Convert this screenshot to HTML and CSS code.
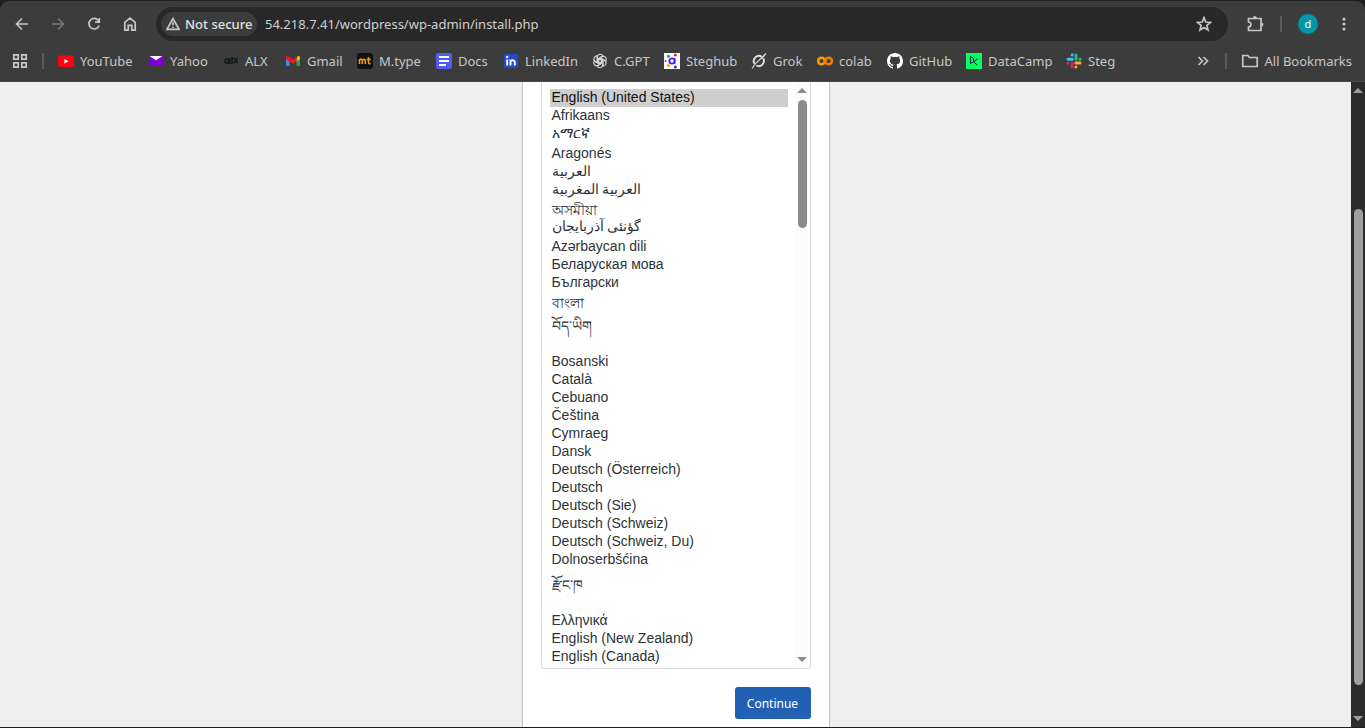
FILE: index.html
```
<!DOCTYPE html>
<html lang="en">
<head>
<meta charset="utf-8">
<title>WordPress › Installation</title>
<link rel="stylesheet" href="styles.css">
</head>
<body>
<div class="window">
<header class="chrome">
  <div class="toolbar">
    <button class="nav" aria-label="Back"><svg width="16" height="16" viewBox="0 0 16 16"><path d="M14 8H3M8 2.500L2.500 8L8 13.500"/></svg></button>
    <button class="nav dim" aria-label="Forward"><svg width="16" height="16" viewBox="0 0 16 16"><path d="M2 8H13M8 2.500L13.500 8L8 13.500"/></svg></button>
    <button class="nav" aria-label="Reload"><svg width="16" height="16" viewBox="0 0 16 16"><path d="M12.800 5A5.300 5.300 0 1 0 13.200 9.500M13.300 2V6.200H9"/></svg></button>
    <button class="nav" aria-label="Home"><svg width="16" height="16" viewBox="0 0 16 16"><path d="M2.800 6.300L8 2.200L13.200 6.300V14.200H9.800V9.300H6.200V14.200H2.800Z"/></svg></button>
    <div class="omnibox">
      <button class="secure"><svg width="14" height="14" viewBox="0 0 14 14"><path d="M7 1.600L13 12.300H1ZM7 5.300V8.600M7 9.700V11"/></svg>Not secure</button>
      <input class="url" type="text" aria-label="Address" value="54.218.7.41/wordpress/wp-admin/install.php">
      <button class="star" aria-label="Bookmark this page"><svg width="16" height="16" viewBox="0 0 16 16"><path d="M8 1.700L9.800 6L14.500 6.400L10.900 9.400L12 14L8 11.500L4 14L5.100 9.400L1.500 6.400L6.200 6Z"/></svg></button>
    </div>
    <button class="nav ext" aria-label="Extensions"><svg width="18" height="18" viewBox="0 0 18 18"><path d="M2.500 3.500H15V15.500H2.500V12Q5 11.500 5 9.500T2.500 7Z"/><path class="knob" d="M7 3A1.900 1.900 0 0 1 10.800 3ZM15.500 7.600A1.900 1.900 0 0 1 15.500 11.400Z"/></svg></button>
    <span class="divider"></span>
    <button class="avatar" aria-label="Profile">d</button>
    <button class="nav menu" aria-label="Menu"><svg width="16" height="16" viewBox="0 0 16 16"><g fill="#c7c7c7" stroke="none"><circle cx="8" cy="3" r="1.600"/><circle cx="8" cy="8" r="1.600"/><circle cx="8" cy="13" r="1.600"/></g></svg></button>
  </div>
  <nav class="bookmarks">
    <button class="apps" aria-label="Tab groups"><svg width="16" height="16" viewBox="0 0 16 16"><path d="M1.800 1.800H6.200V6.200H1.800ZM9.800 1.800H14.200V6.200H9.800ZM1.800 9.800H6.200V14.200H1.800ZM9.800 9.800H14.200V14.200H9.800Z"/></svg></button>
    <span class="divider"></span>
    <div class="links">
      <a href="#"><svg width="16" height="16" viewBox="0 0 16 16"><rect y="2.500" width="16" height="11.500" rx="2.500" fill="#ff0015"/><path d="M6.300 6L10.500 8.200L6.300 10.400Z" fill="#fff"/></svg>YouTube</a>
      <a href="#"><svg width="16" height="16" viewBox="0 0 16 16"><path d="M1 3H15V13H1Z" fill="#7d00d8"/><path d="M1.500 3H14.500L8 7.200Z" fill="#fff"/></svg>Yahoo</a>
      <a href="#"><svg width="16" height="16" viewBox="0 0 16 16" fill="none" stroke="#101c1c" stroke-width="1.700"><circle cx="4" cy="8" r="2"/><path d="M6.500 5.200V11M9 4V11M10.800 5L14.500 10M14.500 5L10.800 10"/></svg>ALX</a>
      <a href="#"><svg width="16" height="16" viewBox="0 0 16 16"><path d="M1 5L4.500 7V13H1Z" fill="#4285f4"/><path d="M11.500 7L15 5V13H11.500Z" fill="#20a653"/><path d="M11.500 5L13 3Q15 2.500 15 5V6L11.500 8.500Z" fill="#fbbc04"/><path d="M1 6V4Q1 2.200 3.500 3.300L8 6.500L11.500 3.800V8.500L8 11L1 6Z" fill="#f01522"/></svg>Gmail</a>
      <a href="#"><svg width="16" height="16" viewBox="0 0 16 16"><rect width="16" height="16" rx="3" fill="#111"/><path d="M2.500 11V6M2.500 7Q4.800 5 5.300 7.500V11M5.300 7.500Q7.800 5 8.300 7.500V11M11.500 4V9.500Q11.700 11 13.500 10.500M9.800 6.500H13.800" fill="none" stroke="#f39c12" stroke-width="1.600"/></svg>M.type</a>
      <a href="#"><svg width="16" height="16" viewBox="0 0 16 16"><rect width="16" height="16" rx="2" fill="#4f5bf7"/><path d="M3 4H13M3 8H13M3 12H10" stroke="#fff" stroke-width="2"/></svg>Docs</a>
      <a href="#"><svg width="16" height="16" viewBox="0 0 16 16"><rect x="1" y="1" width="14" height="14" rx="1" fill="#2649c5"/><path d="M4.200 6.500V12.500M7.500 6.500V12.500M7.500 8.500Q9 6.500 10.800 7.500Q11.800 8 11.800 9V12.500" fill="none" stroke="#fff" stroke-width="1.900"/><circle cx="4.200" cy="4" r="1.200" fill="#fff"/></svg>LinkedIn</a>
      <a href="#"><svg width="16" height="16" viewBox="0 0 16 16" fill="none" stroke="#d4d4d4" stroke-width="1.100"><g id="petal"><path d="M5.300 9.500V4.200Q5.500 1.500 8 1.300Q10 1.200 11 2.800L6.500 5.500V9"/></g><use href="#petal" transform="rotate(60 8 8)"/><use href="#petal" transform="rotate(120 8 8)"/><use href="#petal" transform="rotate(180 8 8)"/><use href="#petal" transform="rotate(240 8 8)"/><use href="#petal" transform="rotate(300 8 8)"/></svg>C.GPT</a>
      <a href="#"><svg width="16" height="16" viewBox="0 0 16 16"><rect width="16" height="16" fill="#fff"/><circle cx="8" cy="8" r="2.600" fill="none" stroke="#4b22e8" stroke-width="1.900"/><path d="M10.700 5V11" stroke="#4b22e8" stroke-width="1.500"/><circle cx="4.500" cy="3.300" r="1.500" fill="#1b9c55"/><circle cx="11.300" cy="2" r="1.600" fill="#ea2b36"/><circle cx="4.500" cy="12.500" r="1.500" fill="#f5b400"/><circle cx="11.300" cy="14" r="1.500" fill="#3a22e8"/><circle cx="1.500" cy="8" r="1" fill="#5b48e8"/></svg>Steghub</a>
      <a href="#"><svg width="16" height="16" viewBox="0 0 16 16" fill="none" stroke="#e2e2e2"><path d="M10.800 3.800A5.200 5.200 0 0 0 3.500 10.800M5.300 12.500A5.200 5.200 0 0 0 12.300 5.500" stroke-width="1.900"/><path d="M1 15.500L5 10L15 .5L10.500 6" stroke-width="1.100"/></svg>Grok</a>
      <a href="#"><svg width="16" height="16" viewBox="0 0 16 16" fill="none" stroke-width="2.600"><circle cx="4.500" cy="8" r="3.300" stroke="#f9a000"/><circle cx="11.600" cy="8" r="3.300" stroke="#f57c08"/></svg>colab</a>
      <a href="#"><svg width="16" height="16" viewBox="0 0 16 16"><path fill="#fff" d="M8 0C3.580 0 0 3.580 0 8c0 3.540 2.290 6.530 5.470 7.590.4.070.55-.17.55-.38 0-.19-.01-.82-.01-1.490-2.010.37-2.530-.49-2.690-.94-.09-.23-.48-.94-.82-1.130-.28-.15-.68-.52-.01-.53.63-.01 1.080.58 1.230.82.72 1.210 1.870.87 2.330.66.070-.52.28-.87.51-1.070-1.780-.2-3.640-.89-3.640-3.950 0-.87.31-1.590.82-2.150-.08-.2-.36-1.020.08-2.120 0 0 .67-.21 2.200.82a7.600 7.600 0 0 1 4 0c1.530-1.040 2.200-.82 2.200-.82.44 1.100.16 1.920.08 2.120.51.56.82 1.270.82 2.150 0 3.070-1.870 3.750-3.650 3.950.29.25.54.73.54 1.480 0 1.070-.01 1.930-.01 2.200 0 .21.15.46.55.38A8 8 0 0 0 16 8c0-4.420-3.580-8-8-8z"/></svg>GitHub</a>
      <a href="#"><svg width="16" height="16" viewBox="0 0 16 16"><rect width="16" height="16" fill="#03ff62"/><path d="M4.500 10.500V3.500L7.500 5.300V8.700L4.500 10.500M11.500 6L7.500 8.700L11.500 12.300" fill="none" stroke="#05192d" stroke-width="1"/></svg>DataCamp</a>
      <a href="#"><svg width="16" height="16" viewBox="0 0 16 16" fill="none" stroke-width="3" stroke-linecap="round"><path d="M6.200 1.800V1.900M6.200 6.200H2" stroke="#36c5f0"/><path d="M10 6.200V2M14 6.200H14.100" stroke="#2eb67d"/><path d="M9.900 10H14M9.900 14V14.100" stroke="#ecb22e"/><path d="M6.200 10V14M2 10H2.100" stroke="#e01e5a"/></svg>Steg</a>
    </div>
    <button class="nav more" aria-label="More bookmarks"><svg width="14" height="14" viewBox="0 0 14 14"><path d="M2.500 3L6.500 7L2.500 11M7.500 3L11.500 7L7.500 11"/></svg></button>
    <span class="divider"></span>
    <a class="all" href="#"><svg width="18" height="16" viewBox="0 0 18 16"><path d="M1.800 2.500H6.800L8.500 4.500H16.200V13.500H1.800Z"/></svg>All Bookmarks</a>
  </nav>
</header>
<div class="viewport">
  <main class="page">
    <form class="card">
      <div class="listbox">
        <select class="languages" size="29" aria-label="Select a default language">
          <option selected>English (United States)</option>
          <option>Afrikaans</option>
          <option class="high" lang="am">አማርኛ</option>
          <option>Aragonés</option>
          <option lang="ar">العربية</option>
          <option lang="ar">العربية المغربية</option>
          <option class="mid" lang="as">অসমীয়া</option>
          <option class="high" lang="azb">گؤنئی آذربایجان</option>
          <option>Azərbaycan dili</option>
          <option>Беларуская мова</option>
          <option>Български</option>
          <option class="indic" lang="bn">বাংলা</option>
          <option class="tall" lang="bo">བོད་ཡིག</option>
          <option>Bosanski</option>
          <option>Català</option>
          <option>Cebuano</option>
          <option>Čeština</option>
          <option>Cymraeg</option>
          <option>Dansk</option>
          <option>Deutsch (Österreich)</option>
          <option>Deutsch</option>
          <option>Deutsch (Sie)</option>
          <option>Deutsch (Schweiz)</option>
          <option>Deutsch (Schweiz, Du)</option>
          <option>Dolnoserbšćina</option>
          <option class="tall" lang="dz">རྫོང་ཁ</option>
          <option>Ελληνικά</option>
          <option>English (New Zealand)</option>
          <option>English (Canada)</option>
        </select>
        <div class="scroll light"><i class="up"></i><b class="thumb"></b><i class="down"></i></div>
      </div>
      <button class="continue" type="submit">Continue</button>
    </form>
  </main>
  <div class="scroll dark"><i class="up"></i><b class="thumb"></b><i class="down"></i></div>
</div>
</div>
</body>
</html>
```
FILE: styles.css
```
* { box-sizing: border-box; }
body { margin: 0; background: #202020; font-family: "Noto Sans", sans-serif; }
button, input { font: inherit; color: inherit; background: none; border: 0; padding: 0; }
a { color: inherit; text-decoration: none; }
svg { flex: none; fill: none; }
.window { display: flex; flex-direction: column; height: 100vh; padding-top: 1px; border-bottom: 1px solid #202020; overflow: hidden; }

.chrome { flex: none; background: #3c3c3c; border-radius: 9px 9px 0 0; color: #c7c7c7; font-size: 13px; border-bottom: 1px solid #484848; }
.nav svg, .apps svg, .secure svg, .star svg, .all svg { stroke: #c7c7c7; stroke-width: 1.7; }
.toolbar { display: flex; align-items: center; height: 46px; padding: 0 13px; }
.nav { display: flex; align-items: center; justify-content: center; width: 36px; height: 30px; }
.toolbar .nav:first-child { margin-left: -9px; }
.nav.dim svg { stroke: #777; }
.nav .knob { fill: #c7c7c7; stroke: none; }
.omnibox { display: flex; flex: 1; align-items: center; height: 34px; margin-left: 8px; padding: 0 16px 0 5px; border-radius: 17px; background: #282828; }
.secure { display: flex; align-items: center; gap: 5px; flex: none; width: 96px; height: 24px; padding-left: 5px; border-radius: 12px; background: #3c3c3c; color: #e3e3e3; font-weight: 500; white-space: nowrap; }
.url { flex: 1; min-width: 0; margin-left: 8px; color: #d0d0d0; outline: 0; }
.star { display: flex; }
.nav.ext { margin-left: 9px; }
.divider { flex: none; width: 2px; height: 16px; background: #5b5b5b; }
.toolbar .divider { margin-left: 7px; }
.avatar { flex: none; width: 20px; height: 20px; margin-left: 16px; border-radius: 50%; background: #0097a7; color: #fff; font-size: 11px; line-height: 20px; text-align: center; }
.nav.menu { width: 16px; margin-left: 18px; }

.bookmarks { display: flex; align-items: center; height: 34px; padding: 0 13px 6px 12px; white-space: nowrap; }
.apps { display: flex; margin-right: 14px; }
.links { display: grid; flex: 1; grid-template-columns: 90px 75px 62px 72px 79px 67px 89px 72px 87px 66px 70px 79px 100px 64px; margin-left: 14px; }
.links a, .all { display: flex; align-items: center; gap: 6px; }
.nav.more { width: 16px; margin-right: 14px; }
.all { margin-left: 14px; gap: 5px; }

.viewport { display: flex; flex: 1; min-height: 0; }
.page { display: flex; flex: 1; justify-content: center; background: #efefef; overflow: hidden; }
.card { display: flex; flex-direction: column; align-items: flex-end; width: 308px; padding: 0 18px; border: solid #c3c4c7; border-width: 0 1px; background: #fff; }
.listbox { display: flex; width: 100%; border: 1px solid #dcdcde; border-top: 0; border-radius: 0 0 3px 3px; }
.languages { flex: 1; min-width: 0; height: 586px; margin: 0; padding: 7px 7px 0 8px; border: 0; outline: 0; background: #fff; color: #2c3338; font-family: "Liberation Sans", "Noto Sans", sans-serif; font-size: 14px; line-height: 18px; overflow: hidden; scrollbar-width: none; }
.languages option { height: 18px; min-height: 18px; padding: 0 2px; direction: ltr; text-align: left; line-height: 17px; }
.languages .indic { line-height: 15px; }
.languages .mid { height: 19px; line-height: 16px; }
.languages .high { height: 20px; line-height: 20px; }
.languages .tall { height: 43px; line-height: 40px; }
.languages option:checked { background: #cecece linear-gradient(#cecece, #cecece); color: #101010; }
.scroll { display: flex; flex: none; flex-direction: column; align-items: center; width: 15px; padding: 6px 0; }
.scroll i { width: 0; border: 5px solid transparent; }
.scroll .up { border-top: 0; border-bottom-color: var(--thumb); }
.scroll .down { border-bottom: 0; border-top-color: var(--thumb); margin-top: auto; }
.thumb { width: 9px; border-radius: 5px; background: var(--thumb); }
.light { --thumb: #8b8b8b; background: #fcfcfc; }
.light .thumb { height: 128px; margin-top: 7px; }
.dark { --thumb: #9f9f9f; width: 14px; background: #2c2c2c; }
.dark .thumb { height: 476px; margin-top: 116px; }
.continue { width: 76px; height: 32px; margin-top: 18px; border-radius: 3px; background: #2260b4; color: #fff; font-size: 12px; }
```
